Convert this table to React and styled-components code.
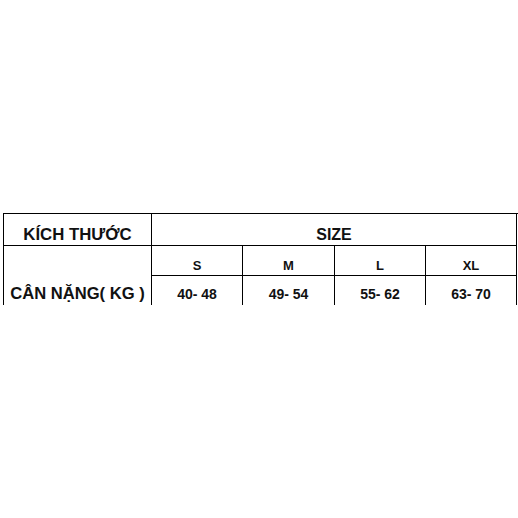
import React from 'react';
import styled, { createGlobalStyle } from 'styled-components';

const GlobalStyle = createGlobalStyle`
  html, body {
    margin: 0;
    padding: 0;
    background: #fff;
  }
  body {
    font-family: "Liberation Sans", Arial, sans-serif;
    color: #111;
  }
`;

const Page = styled.div`
  width: 518px;
  height: 518px;
  overflow: hidden;
  padding: 213px 0 0 3px;
  box-sizing: border-box;
`;

const Sheet = styled.div`
  display: grid;
  grid-template-columns: 148px 91px 92px 91px 91px;
  grid-template-rows: 32px 30px 30px;
  width: 514px;
  border-right: 1px solid #000;
  box-sizing: border-box;
  position: relative;

  /* the top rule runs on past the right edge, as in the sheet */
  &::after {
    content: '';
    position: absolute;
    top: 0;
    right: -4px;
    width: 4px;
    height: 1px;
    background: #000;
  }
`;

const Cell = styled.div`
  display: flex;
  justify-content: center;
  align-items: flex-end;
  box-sizing: border-box;
  border-left: 1px solid #000;
  border-top: ${(p) => (p.$noTop ? 'none' : '1px solid #000')};
  grid-column: ${(p) => p.$col || 'auto'};
  grid-row: ${(p) => p.$row || 'auto'};
  padding-bottom: ${(p) => p.$pad || 1}px;
  font-weight: 700;
  font-size: ${(p) => p.$size || 14}px;
  line-height: ${(p) => Math.round((p.$size || 14) + 2)}px;
  white-space: nowrap;
`;

const sizes = [
  { label: 'S', range: '40- 48' },
  { label: 'M', range: '49- 54' },
  { label: 'L', range: '55- 62' },
  { label: 'XL', range: '63- 70' },
];

export default function App() {
  return (
    <>
      <GlobalStyle />
      <Page>
        <Sheet>
          <Cell $col="1" $row="1" $size={16.8} $pad={1}>KÍCH THƯỚC</Cell>
          <Cell $col="2 / 6" $row="1" $size={16} $pad={1}>SIZE</Cell>
          <Cell $col="1" $row="2 / 4" $size={16.6} $pad={2}>CÂN NẶNG( KG )</Cell>
          {sizes.map((s, i) => (
            <Cell key={s.label} $col={`${i + 2}`} $row="2" $size={13} $pad={2}>
              {s.label}
            </Cell>
          ))}
          {sizes.map((s, i) => (
            <Cell key={s.range} $col={`${i + 2}`} $row="3" $size={14} $pad={3}>
              {s.range}
            </Cell>
          ))}
        </Sheet>
      </Page>
    </>
  );
}
